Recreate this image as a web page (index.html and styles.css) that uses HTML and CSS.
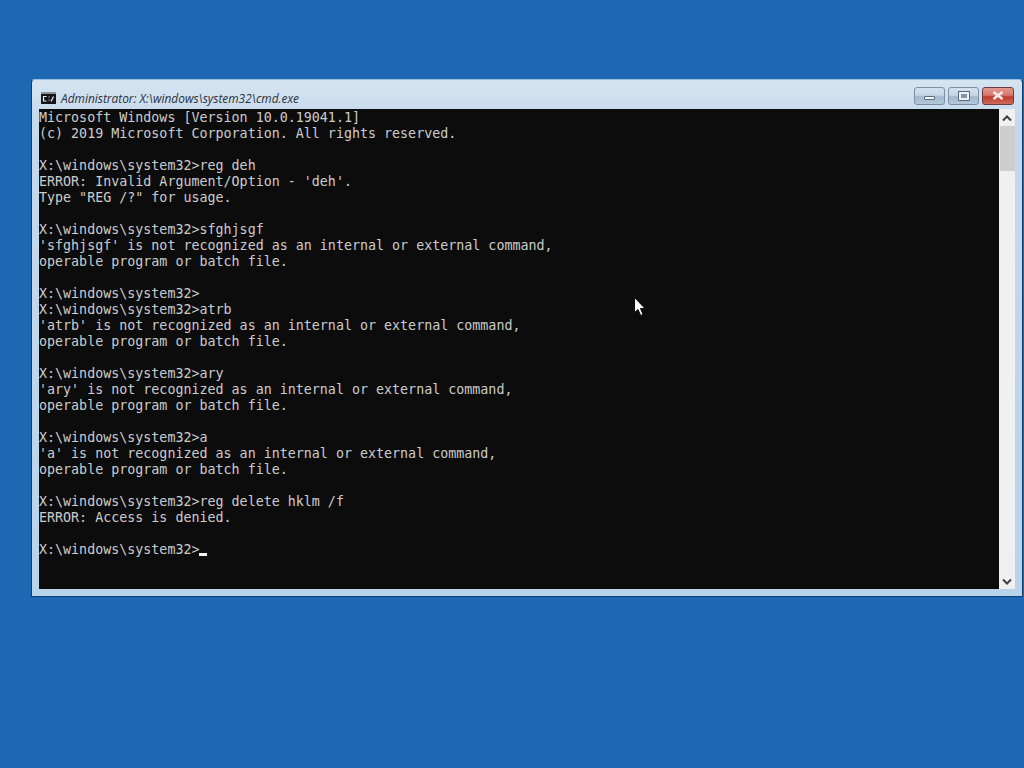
FILE: index.html
```html
<!DOCTYPE html>
<html lang="en">
<head>
<meta charset="utf-8">
<title>cmd.exe</title>
<link rel="stylesheet" href="styles.css">
</head>
<body>
<div class="desktop">
  <section class="window">
    <header class="titlebar">
      <svg class="app-icon" width="15" height="12" viewBox="0 0 15 12">
        <rect width="15" height="12" fill="#15161a"/>
        <rect y="0" width="15" height="2" fill="#8d929b"/>
        <path d="M5.5 4.5H2.5V9H5.5M7.5 5H8.5M7.5 8H8.5M10 9.5L12.5 4.5" stroke="#eef0f2" stroke-width="1.2" fill="none"/>
      </svg>
      <span class="title">Administrator: X:\windows\system32\cmd.exe</span>
      <div class="controls">
        <button class="ctl ctl-min"><span class="glyph-min"></span></button>
        <button class="ctl ctl-max"><span class="glyph-max"></span></button>
        <button class="ctl ctl-close">
          <svg width="12" height="9" viewBox="0 0 12 9"><path d="M1.5 1L10.5 8M10.5 1L1.5 8" stroke="#f4ece9" stroke-width="2.6" fill="none"/></svg>
        </button>
      </div>
    </header>
    <div class="client">
      <pre class="console">Microsoft Windows [Version 10.0.19041.1]
(c) 2019 Microsoft Corporation. All rights reserved.

X:\windows\system32&gt;reg deh
ERROR: Invalid Argument/Option - 'deh'.
Type "REG /?" for usage.

X:\windows\system32&gt;sfghjsgf
'sfghjsgf' is not recognized as an internal or external command,
operable program or batch file.

X:\windows\system32&gt;
X:\windows\system32&gt;atrb
'atrb' is not recognized as an internal or external command,
operable program or batch file.

X:\windows\system32&gt;ary
'ary' is not recognized as an internal or external command,
operable program or batch file.

X:\windows\system32&gt;a
'a' is not recognized as an internal or external command,
operable program or batch file.

X:\windows\system32&gt;reg delete hklm /f
ERROR: Access is denied.

X:\windows\system32&gt;<span class="caret"></span></pre>
      <div class="scrollbar">
        <svg class="arrow" width="16" height="17" viewBox="0 0 16 17"><path d="M4 11.5L8 7.5L12 11.5" stroke="#3f3f3f" stroke-width="2" fill="none"/></svg>
        <div class="thumb"></div>
        <div class="track"></div>
        <svg class="arrow" width="16" height="17" viewBox="0 0 16 17"><path d="M4 7.5L8 11.5L12 7.5" stroke="#3f3f3f" stroke-width="2" fill="none"/></svg>
      </div>
    </div>
  </section>
  <svg class="pointer" width="12" height="20" viewBox="0 0 12 20">
    <path d="M0.5 0.5V15.5L4 12.5L6.7 18.5L9 17.5L6.5 11.5H11Z" fill="#fff" stroke="#0c0c0c" stroke-width="1"/>
  </svg>
</div>
</body>
</html>
```
FILE: styles.css
```css
html, body {
  margin: 0;
  height: 100%;
}
.desktop {
  position: relative;
  width: 1024px;
  height: 768px;
  overflow: hidden;
  background: #1e67b3;
}
.window {
  position: absolute;
  left: 31px;
  top: 79px;
  width: 992px;
  height: 518px;
  box-sizing: border-box;
  display: flex;
  flex-direction: column;
  padding: 0 7px 7px;
  background: linear-gradient(#d5e4f1 0, #c5d9ec 40px, #b9d3ea 100%);
  border: 1px solid #0e3d6e;
  border-bottom-color: #0c3f72;
  border-top-color: #9cc0de;
  border-radius: 4px 4px 0 0;
}
.titlebar {
  height: 29px;
  flex: none;
  display: flex;
  align-items: center;
  padding: 7px 0 0 2px;
  box-sizing: border-box;
}
.app-icon {
  flex: none;
  margin-right: 5px;
}
.title {
  font: italic 11.9px/16px "Open Sans", sans-serif;
  color: #2c3038;
  flex: 1;
  white-space: nowrap;
}
.controls {
  display: flex;
  gap: 3px;
  margin-right: 1px;
  margin-top: -5px;
}
.ctl {
  width: 31px;
  height: 18px;
  padding: 0;
  display: flex;
  align-items: center;
  justify-content: center;
  border: 1px solid #7d90a6;
  border-radius: 3px;
  background: linear-gradient(#d3e1ee 0, #c4d6e8 45%, #a3b7ca 55%, #b3c8db 100%);
}
.ctl-close {
  width: 32px;
  border-color: #6d3a3e;
  background: linear-gradient(#e39a90 0, #d9776c 45%, #bf3a2b 55%, #cf6a5e 100%);
}
.glyph-min {
  display: block;
  box-sizing: border-box;
  width: 11px;
  height: 4px;
  margin-top: 4px;
  background: #f2f5f8;
  border: 1px solid #5b6a7e;
  border-radius: 1px;
}
.glyph-max {
  display: block;
  box-sizing: border-box;
  width: 10px;
  height: 8px;
  background: #8094aa;
  border: 2px solid #eef2f6;
  box-shadow: 0 0 0 1px #5b6a7e;
}
.client {
  flex: 1;
  display: flex;
  min-height: 0;
}
.console {
  flex: 1;
  margin: 0;
  padding-top: 1px;
  background: #0c0c0c;
  color: #cccccc;
  font: 13.33px/16px "DejaVu Sans Mono", monospace;
  overflow: hidden;
  white-space: pre;
}
.caret {
  display: inline-block;
  width: 8px;
  height: 3px;
  background: #f2f2f2;
  vertical-align: -2px;
}
.scrollbar {
  width: 16px;
  flex: none;
  display: flex;
  flex-direction: column;
  background: #f0f0f0;
}
.arrow {
  display: block;
  flex: none;
}
.thumb {
  height: 45px;
  flex: none;
  margin-left: 1px;
  background: #cdcdcd;
}
.track {
  flex: 1;
}
.pointer {
  position: absolute;
  left: 634px;
  top: 297px;
}
```
